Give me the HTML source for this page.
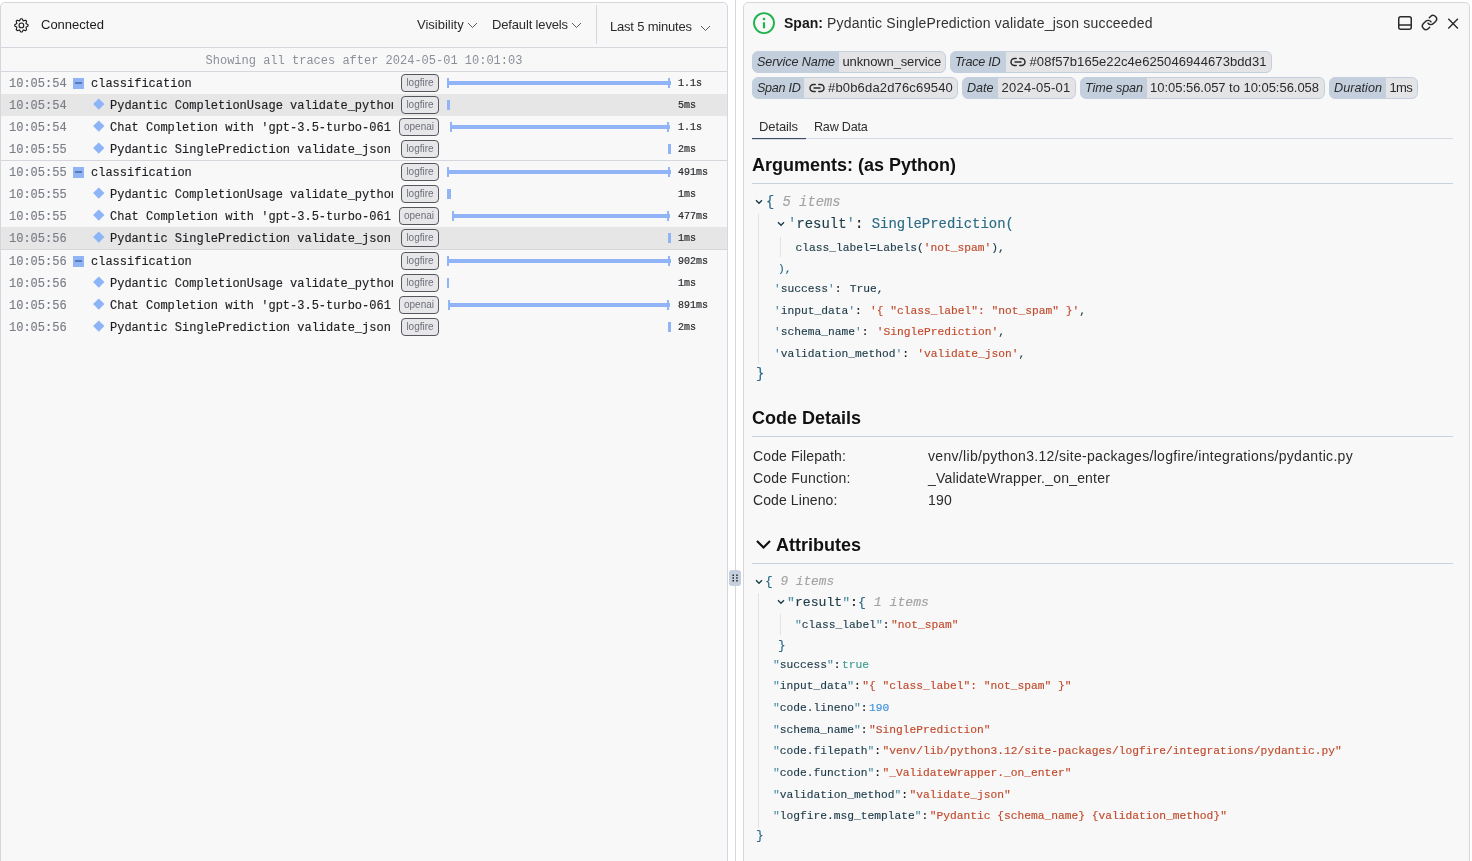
<!DOCTYPE html>
<html><head><meta charset="utf-8">
<style>
*{box-sizing:border-box;margin:0;padding:0}
html,body{width:1472px;height:861px;overflow:hidden;background:#fff;font-family:"Liberation Sans",sans-serif;position:relative}
#root{position:absolute;left:0;top:0;width:1472px;height:861px;will-change:transform}
.abs{position:absolute}
.panel{position:absolute;background:#f8f8f8;border:1px solid #d6d7dd;border-radius:5px 5px 0 0;}
#left{left:0;top:2px;width:728px;height:900px;}
#right{left:743px;top:2px;width:727px;height:900px;}
.vline{position:absolute;background:#d6d7dd}
.mono{font-family:"Liberation Mono",monospace;-webkit-text-stroke:0.15px currentColor}
.t{position:absolute;white-space:nowrap}
.ts{position:absolute;left:9px;margin-top:1px;font:12px/22px "Liberation Mono",monospace;color:#7a7e87;-webkit-text-stroke:0.15px currentColor}
.nm{position:absolute;margin-top:1px;font:12px/22px "Liberation Mono",monospace;color:#1d1e21;white-space:nowrap;overflow:hidden;-webkit-text-stroke:0.15px currentColor}
.badge{position:absolute;height:18px;border:1px solid #55575d;border-radius:4px;background:#e7e7ea;font:10px/16px "Liberation Sans",sans-serif;color:#6d7079;text-align:center}
.hl{position:absolute;left:1px;width:726px;height:22px;background:#e6e6e6}
.bar{position:absolute;background:#91b4f6}
.dur{position:absolute;left:678px;margin-top:1px;font:10px/22px "Liberation Mono",monospace;color:#2a2c30;-webkit-text-stroke:0.2px currentColor}
.dia{position:absolute;width:7.5px;height:7.5px;background:#8db4f7;transform:rotate(45deg)}
.minus{position:absolute;left:73px;width:11px;height:11px;background:#91b4f6}
.tag{height:22px;border:1px solid #c4cfde;border-radius:6px;background:#c4cfde;overflow:hidden}
.tl{position:absolute;left:0;top:0;height:20px;padding-left:4px;font:italic 12.6px/20px "Liberation Sans",sans-serif;color:#2b2b2b;white-space:nowrap}
.tv{position:absolute;top:0;height:20px;background:#e4e4e7}
.h2{font:bold 18px/22px "Liberation Sans",sans-serif;color:#111}
.minus:after{content:"";position:absolute;left:2px;top:3.8px;width:7px;height:2px;background:#5b7ab8}
</style></head><body><div id="root">

<div id="left" class="panel">
</div>
<div class="abs" style="left:0;top:0;width:728px;height:861px">
<svg class="abs" style="left:9px;top:13px" width="24" height="24" viewBox="-0.4 -0.4 24 24" fill="none" stroke="#1a1a1a" stroke-width="1.1" stroke-linejoin="round"><path d="M11.30 5.34 L12.70 5.34 L13.88 7.47 L16.22 6.79 L17.21 7.78 L16.53 10.12 L18.66 11.30 L18.66 12.70 L16.53 13.88 L17.21 16.22 L16.22 17.21 L13.88 16.53 L12.70 18.66 L11.30 18.66 L10.12 16.53 L7.78 17.21 L6.79 16.22 L7.47 13.88 L5.34 12.70 L5.34 11.30 L7.47 10.12 L6.79 7.78 L7.78 6.79 L10.12 7.47Z"/><circle cx="12" cy="12" r="2.35"/></svg>
<div class="t" style="left:41px;top:17px;font-size:13px;line-height:16px;color:#1c1c1c">Connected</div>
<div class="t" style="left:417px;top:17px;font-size:13px;line-height:16px;color:#2a2a2a">Visibility</div>
<svg class="abs" style="left:467px;top:22px" width="11" height="7" viewBox="0 0 11 7" fill="none" stroke="#5a5a5a" stroke-width="1"><path d="M1 1l4.5 4.5L10 1"/></svg>
<div class="t" style="left:492px;top:17px;font-size:13px;line-height:16px;color:#2a2a2a;letter-spacing:-0.15px">Default levels</div>
<svg class="abs" style="left:571px;top:22px" width="11" height="7" viewBox="0 0 11 7" fill="none" stroke="#5a5a5a" stroke-width="1"><path d="M1 1l4.5 4.5L10 1"/></svg>
<div class="vline" style="left:596px;top:5px;width:1px;height:39px"></div>
<div class="t" style="left:610px;top:19px;font-size:13px;line-height:16px;color:#2a2a2a;letter-spacing:-0.2px">Last 5 minutes</div>
<svg class="abs" style="left:700px;top:25px" width="11" height="7" viewBox="0 0 11 7" fill="none" stroke="#5a5a5a" stroke-width="1"><path d="M1 1l4.5 4.5L10 1"/></svg>
<div class="vline" style="left:1px;top:47px;width:726px;height:1px"></div>
<div class="t mono" style="left:0;width:728px;text-align:center;top:50px;font-size:12px;line-height:23px;color:#8a8f98;-webkit-text-stroke:0">Showing all traces after 2024-05-01 10:01:03</div>
<div class="vline" style="left:1px;top:71px;width:726px;height:1px"></div>
<div class="ts" style="top:72px">10:05:54</div>
<div class="minus" style="top:78px"></div>
<div class="nm" style="left:91px;top:72px;width:300px">classification</div>
<div class="badge" style="left:401px;top:74px;width:38px">logfire</div>
<div class="bar" style="left:447px;top:81px;width:224px;height:4px"></div>
<div class="bar" style="left:447px;top:78px;width:2px;height:10px"></div>
<div class="bar" style="left:668px;top:78px;width:2px;height:10px"></div>
<div class="dur" style="top:72px">1.1s</div>
<div class="hl" style="top:94px"></div>
<div class="ts" style="top:94px">10:05:54</div>
<div class="dia" style="left:95px;top:100.4px"></div>
<div class="nm" style="left:110px;top:94px;width:283px">Pydantic CompletionUsage validate_python</div>
<div class="badge" style="left:401px;top:96px;width:38px">logfire</div>
<div class="bar" style="left:447px;top:100px;width:3px;height:10px"></div>
<div class="dur" style="top:94px">5ms</div>
<div class="ts" style="top:116px">10:05:54</div>
<div class="dia" style="left:95px;top:122.4px"></div>
<div class="nm" style="left:110px;top:116px;width:283px">Chat Completion with &#39;gpt-3.5-turbo-061</div>
<div class="badge" style="left:399px;top:118px;width:40px">openai</div>
<div class="bar" style="left:450px;top:125px;width:220px;height:4px"></div>
<div class="bar" style="left:450px;top:122px;width:2px;height:10px"></div>
<div class="bar" style="left:667px;top:122px;width:2px;height:10px"></div>
<div class="dur" style="top:116px">1.1s</div>
<div class="ts" style="top:138px">10:05:55</div>
<div class="dia" style="left:95px;top:144.4px"></div>
<div class="nm" style="left:110px;top:138px;width:283px">Pydantic SinglePrediction validate_json</div>
<div class="badge" style="left:401px;top:140px;width:38px">logfire</div>
<div class="bar" style="left:668px;top:144px;width:3px;height:10px"></div>
<div class="dur" style="top:138px">2ms</div>
<div class="ts" style="top:161px">10:05:55</div>
<div class="minus" style="top:167px"></div>
<div class="nm" style="left:91px;top:161px;width:300px">classification</div>
<div class="badge" style="left:401px;top:163px;width:38px">logfire</div>
<div class="bar" style="left:447px;top:170px;width:224px;height:4px"></div>
<div class="bar" style="left:447px;top:167px;width:2px;height:10px"></div>
<div class="bar" style="left:668px;top:167px;width:2px;height:10px"></div>
<div class="dur" style="top:161px">491ms</div>
<div class="ts" style="top:183px">10:05:55</div>
<div class="dia" style="left:95px;top:189.4px"></div>
<div class="nm" style="left:110px;top:183px;width:283px">Pydantic CompletionUsage validate_python</div>
<div class="badge" style="left:401px;top:185px;width:38px">logfire</div>
<div class="bar" style="left:447px;top:189px;width:4px;height:10px"></div>
<div class="dur" style="top:183px">1ms</div>
<div class="ts" style="top:205px">10:05:55</div>
<div class="dia" style="left:95px;top:211.4px"></div>
<div class="nm" style="left:110px;top:205px;width:283px">Chat Completion with &#39;gpt-3.5-turbo-061</div>
<div class="badge" style="left:399px;top:207px;width:40px">openai</div>
<div class="bar" style="left:452px;top:214px;width:218px;height:4px"></div>
<div class="bar" style="left:452px;top:211px;width:2px;height:10px"></div>
<div class="bar" style="left:667px;top:211px;width:2px;height:10px"></div>
<div class="dur" style="top:205px">477ms</div>
<div class="hl" style="top:227px"></div>
<div class="ts" style="top:227px">10:05:56</div>
<div class="dia" style="left:95px;top:233.4px"></div>
<div class="nm" style="left:110px;top:227px;width:283px">Pydantic SinglePrediction validate_json</div>
<div class="badge" style="left:401px;top:229px;width:38px">logfire</div>
<div class="bar" style="left:668px;top:233px;width:3px;height:10px"></div>
<div class="dur" style="top:227px">1ms</div>
<div class="ts" style="top:250px">10:05:56</div>
<div class="minus" style="top:256px"></div>
<div class="nm" style="left:91px;top:250px;width:300px">classification</div>
<div class="badge" style="left:401px;top:252px;width:38px">logfire</div>
<div class="bar" style="left:447px;top:259px;width:224px;height:4px"></div>
<div class="bar" style="left:447px;top:256px;width:2px;height:10px"></div>
<div class="bar" style="left:668px;top:256px;width:2px;height:10px"></div>
<div class="dur" style="top:250px">902ms</div>
<div class="ts" style="top:272px">10:05:56</div>
<div class="dia" style="left:95px;top:278.4px"></div>
<div class="nm" style="left:110px;top:272px;width:283px">Pydantic CompletionUsage validate_python</div>
<div class="badge" style="left:401px;top:274px;width:38px">logfire</div>
<div class="bar" style="left:447px;top:278px;width:2px;height:10px"></div>
<div class="dur" style="top:272px">1ms</div>
<div class="ts" style="top:294px">10:05:56</div>
<div class="dia" style="left:95px;top:300.4px"></div>
<div class="nm" style="left:110px;top:294px;width:283px">Chat Completion with &#39;gpt-3.5-turbo-061</div>
<div class="badge" style="left:399px;top:296px;width:40px">openai</div>
<div class="bar" style="left:448px;top:303px;width:222px;height:4px"></div>
<div class="bar" style="left:448px;top:300px;width:2px;height:10px"></div>
<div class="bar" style="left:667px;top:300px;width:2px;height:10px"></div>
<div class="dur" style="top:294px">891ms</div>
<div class="ts" style="top:316px">10:05:56</div>
<div class="dia" style="left:95px;top:322.4px"></div>
<div class="nm" style="left:110px;top:316px;width:283px">Pydantic SinglePrediction validate_json</div>
<div class="badge" style="left:401px;top:318px;width:38px">logfire</div>
<div class="bar" style="left:668px;top:322px;width:3px;height:10px"></div>
<div class="dur" style="top:316px">2ms</div>
<div class="vline" style="left:1px;top:160px;width:726px;height:1px"></div>
<div class="vline" style="left:1px;top:249px;width:726px;height:1px"></div>
</div>

<div class="vline" style="left:735px;top:0;width:1px;height:861px"></div>
<div class="abs" style="left:729px;top:570px;width:12px;height:16px;border-radius:3px;background:#c5cfdd"></div>
<svg class="abs" style="left:729px;top:570px" width="12" height="16"><g fill="#222"><rect x="3.5" y="4.5" width="1.5" height="1.5"/><rect x="7.2" y="4.5" width="1.5" height="1.5"/><rect x="3.5" y="7.2" width="1.5" height="1.5"/><rect x="7.2" y="7.2" width="1.5" height="1.5"/><rect x="3.5" y="10" width="1.5" height="1.5"/><rect x="7.2" y="10" width="1.5" height="1.5"/></g></svg>

<div id="right" class="panel"></div>

<svg class="abs" style="left:752px;top:12px" width="24" height="24" viewBox="0 0 24 24" fill="none" stroke="#1fb34c" stroke-width="1.9"><circle cx="12" cy="11.1" r="10"/><path d="M12 10.3v6" stroke-width="2.2"/><circle cx="12" cy="7" r="0.6" fill="#1fb34c" stroke-width="1.4"/></svg>
<div class="t" style="left:784px;top:14px;font-size:14px;line-height:18px;color:#333"><b style="color:#1a1a1a">Span:</b><span style="letter-spacing:0.2px"> Pydantic SinglePrediction validate_json succeeded</span></div>
<svg class="abs" style="left:1397px;top:15px" width="16" height="16" viewBox="0 0 16 16" fill="none" stroke="#2a2a2a" stroke-width="1.5"><rect x="1.75" y="1.75" width="12.5" height="12.5" rx="2"/><path d="M1.75 10h12.5"/></svg>
<svg class="abs" style="left:1420.5px;top:14.3px" width="17" height="17" viewBox="0 0 24 24" fill="none" stroke="#2a2a2a" stroke-width="2.1" stroke-linecap="round" stroke-linejoin="round"><path d="M10 13a5 5 0 0 0 7.54.54l3-3a5 5 0 0 0-7.07-7.07l-1.72 1.71"/><path d="M14 11a5 5 0 0 0-7.54-.54l-3 3a5 5 0 0 0 7.07 7.07l1.71-1.71"/></svg>
<svg class="abs" style="left:1446px;top:16px" width="14" height="14" viewBox="0 0 14 14" fill="none" stroke="#2a2a2a" stroke-width="1.4"><path d="M2.3 2.8l9.6 9.6M11.9 2.8L2.3 12.4"/></svg>
<div class="abs tag" style="left:752px;top:51px;width:194px"><div class="tl" style="width:87px;letter-spacing:-0.094px">Service Name</div><div class="tv" style="left:86px;width:107px"></div></div>
<div class="t" style="left:842.5px;top:51px;line-height:22px;font-size:13px;color:#2a2a2a;letter-spacing:-0.129px">unknown_service</div>
<div class="abs tag" style="left:950px;top:51px;width:322px"><div class="tl" style="width:56px;letter-spacing:-0.234px">Trace ID</div><div class="tv" style="left:55px;width:266px"></div></div>
<svg class="abs" style="left:1010px;top:56px" width="16" height="12" viewBox="0 0 16 12" fill="none" stroke="#2a2a2a" stroke-width="1.5" stroke-linecap="round"><path d="M6.2 2.5H4.5a3.5 3.5 0 0 0 0 7h1.7M9.8 2.5h1.7a3.5 3.5 0 0 1 0 7H9.8M5 6h6"/></svg>
<div class="t" style="left:1029.5px;top:51px;line-height:22px;font-size:13px;color:#2a2a2a;letter-spacing:0.084px">#08f57b165e22c4e625046944673bdd31</div>
<div class="abs tag" style="left:752px;top:77px;width:206px"><div class="tl" style="width:52px;letter-spacing:-0.290px">Span ID</div><div class="tv" style="left:51px;width:154px"></div></div>
<svg class="abs" style="left:809px;top:82px" width="16" height="12" viewBox="0 0 16 12" fill="none" stroke="#2a2a2a" stroke-width="1.5" stroke-linecap="round"><path d="M6.2 2.5H4.5a3.5 3.5 0 0 0 0 7h1.7M9.8 2.5h1.7a3.5 3.5 0 0 1 0 7H9.8M5 6h6"/></svg>
<div class="t" style="left:828px;top:77px;line-height:22px;font-size:13px;color:#2a2a2a;letter-spacing:0.166px">#b0b6da2d76c69540</div>
<div class="abs tag" style="left:962px;top:77px;width:114px"><div class="tl" style="width:36px;letter-spacing:-0.029px">Date</div><div class="tv" style="left:35px;width:78px"></div></div>
<div class="t" style="left:1001.5px;top:77px;line-height:22px;font-size:13px;color:#2a2a2a;letter-spacing:0.250px">2024-05-01</div>
<div class="abs tag" style="left:1080px;top:77px;width:245px"><div class="tl" style="width:67px;letter-spacing:-0.079px">Time span</div><div class="tv" style="left:66px;width:178px"></div></div>
<div class="t" style="left:1150px;top:77px;line-height:22px;font-size:13px;color:#2a2a2a;letter-spacing:-0.031px">10:05:56.057 to 10:05:56.058</div>
<div class="abs tag" style="left:1329px;top:77px;width:89px"><div class="tl" style="width:57px;letter-spacing:0.047px">Duration</div><div class="tv" style="left:56px;width:32px"></div></div>
<div class="t" style="left:1389.5px;top:77px;line-height:22px;font-size:13px;color:#2a2a2a;letter-spacing:-0.686px">1ms</div>
<div class="t" style="left:759px;top:119px;font-size:13px;line-height:16px;color:#2f2f2f;letter-spacing:-0.105px">Details</div>
<div class="t" style="left:814px;top:119px;font-size:12.6px;line-height:16px;color:#2f2f2f;letter-spacing:-0.228px">Raw Data</div>
<div class="vline" style="left:752px;top:138px;width:701px;height:1px;background:#d3dae4"></div>
<div class="abs" style="left:752px;top:138px;width:54px;height:1px;background:#3d4d68;box-shadow:0 0.5px 0 rgba(61,77,104,0.35)"></div>
<div class="t h2" style="left:752px;top:154px">Arguments: (as Python)</div>
<div class="vline" style="left:752px;top:183px;width:701px;height:1px;background:#c9d3e0"></div>
<svg class="abs" style="left:755px;top:199px" width="8" height="6" viewBox="0 0 8 6" fill="none" stroke="#1d3b49" stroke-width="1.4"><path d="M1 1.2l3 3 3-3"/></svg>
<div class="t mono" style="left:766px;top:193.5px;font-size:13.8px;line-height:18px"><span style="color:#2b6b85">{</span> <span style="color:#a3a3a3;font-style:italic">5 items</span></div>
<div class="vline" style="left:758px;top:214px;width:1px;height:150px;background:#e3e3e3"></div>
<svg class="abs" style="left:777px;top:221px" width="8" height="6" viewBox="0 0 8 6" fill="none" stroke="#1d3b49" stroke-width="1.4"><path d="M1 1.2l3 3 3-3"/></svg>
<div class="t mono" style="left:788px;top:215px;font-size:13.95px;line-height:18px"><span style="color:#4f8ea3">'</span><span style="color:#1d3b49">result</span><span style="color:#4f8ea3">'</span><span style="color:#161616">: </span><span style="color:#2b6b85">SinglePrediction(</span></div>
<div class="vline" style="left:780px;top:237px;width:1px;height:20px;background:#e3e3e3"></div>
<div class="t mono" style="left:795.5px;top:240px;font-size:11.25px;line-height:16px"><span style="color:#1d3b49">class_label=Labels(</span><span style="color:#c04a2c">'not_spam'</span><span style="color:#1d3b49">),</span></div>
<div class="t mono" style="left:778px;top:260.5px;font-size:11.25px;line-height:16px"><span style="color:#2b6b85">),</span></div>
<div class="t mono" style="left:774px;top:280.5px;font-size:11.25px;line-height:16px"><span style="color:#4f8ea3">'</span><span style="color:#1d3b49">success</span><span style="color:#4f8ea3">'</span><span style="color:#161616">: </span><span style="margin-left:1.5px"></span><span style="color:#1d3b49">True,</span></div>
<div class="t mono" style="left:774px;top:302.7px;font-size:11.25px;line-height:16px"><span style="color:#4f8ea3">'</span><span style="color:#1d3b49">input_data</span><span style="color:#4f8ea3">'</span><span style="color:#161616">: </span><span style="margin-left:1.5px"></span><span style="color:#c04a2c">'{ "class_label": "not_spam" }'</span><span style="color:#1d3b49">,</span></div>
<div class="t mono" style="left:774px;top:324px;font-size:11.25px;line-height:16px"><span style="color:#4f8ea3">'</span><span style="color:#1d3b49">schema_name</span><span style="color:#4f8ea3">'</span><span style="color:#161616">: </span><span style="margin-left:1.5px"></span><span style="color:#c04a2c">'SinglePrediction'</span><span style="color:#1d3b49">,</span></div>
<div class="t mono" style="left:774px;top:345.7px;font-size:11.25px;line-height:16px"><span style="color:#4f8ea3">'</span><span style="color:#1d3b49">validation_method</span><span style="color:#4f8ea3">'</span><span style="color:#161616">: </span><span style="margin-left:1.5px"></span><span style="color:#c04a2c">'validate_json'</span><span style="color:#1d3b49">,</span></div>
<div class="t mono" style="left:756px;top:365.5px;font-size:13.8px;line-height:18px"><span style="color:#2b6b85">}</span></div>
<div class="t h2" style="left:752px;top:407px">Code Details</div>
<div class="vline" style="left:752px;top:436px;width:701px;height:1px;background:#c9d3e0"></div>
<div class="t" style="left:753px;top:447px;font-size:14px;line-height:18px;color:#2b2b2b;letter-spacing:0.139px">Code Filepath:</div>
<div class="t" style="left:928px;top:447px;font-size:14px;line-height:18px;color:#2b2b2b;letter-spacing:0.320px">venv/lib/python3.12/site-packages/logfire/integrations/pydantic.py</div>
<div class="t" style="left:753px;top:469px;font-size:14px;line-height:18px;color:#2b2b2b;letter-spacing:0.183px">Code Function:</div>
<div class="t" style="left:928px;top:469px;font-size:14px;line-height:18px;color:#2b2b2b;letter-spacing:0.195px">_ValidateWrapper._on_enter</div>
<div class="t" style="left:753px;top:491px;font-size:14px;line-height:18px;color:#2b2b2b;letter-spacing:0.101px">Code Lineno:</div>
<div class="t" style="left:928px;top:491px;font-size:14px;line-height:18px;color:#2b2b2b;letter-spacing:0.214px">190</div>
<svg class="abs" style="left:755px;top:538px" width="17" height="13" viewBox="0 0 17 13" fill="none" stroke="#111" stroke-width="2.2"><path d="M2 3l6.5 6.5L15 3"/></svg>
<div class="t h2" style="left:776px;top:534px">Attributes</div>
<div class="vline" style="left:752px;top:563px;width:701px;height:1px;background:#c9d3e0"></div>
<svg class="abs" style="left:755px;top:579px" width="8" height="6" viewBox="0 0 8 6" fill="none" stroke="#1d3b49" stroke-width="1.4"><path d="M1 1.2l3 3 3-3"/></svg>
<div class="t mono" style="left:765px;top:573px;font-size:12.8px;line-height:18px"><span style="color:#2b6b85">{</span> <span style="color:#a3a3a3;font-style:italic">9 items</span></div>
<div class="vline" style="left:758px;top:593px;width:1px;height:235px;background:#e3e3e3"></div>
<svg class="abs" style="left:777px;top:599px" width="8" height="6" viewBox="0 0 8 6" fill="none" stroke="#1d3b49" stroke-width="1.4"><path d="M1 1.2l3 3 3-3"/></svg>
<div class="t mono" style="left:787px;top:594px;font-size:13.15px;line-height:18px"><span style="color:#4f8ea3">"</span><span style="color:#1d3b49">result</span><span style="color:#4f8ea3">"</span><span style="color:#161616">:</span><span style="color:#2b6b85">{</span> <span style="color:#a3a3a3;font-style:italic">1 items</span></div>
<div class="vline" style="left:780px;top:614px;width:1px;height:21px;background:#e3e3e3"></div>
<div class="t mono" style="left:795px;top:616.8px;font-size:11.25px;line-height:16px"><span style="color:#4f8ea3">"</span><span style="color:#1d3b49">class_label</span><span style="color:#4f8ea3">"</span><span style="color:#161616">:</span><span style="margin-left:1.5px"></span><span style="color:#c04a2c">"not_spam"</span></div>
<div class="t mono" style="left:778px;top:636.5px;font-size:12.7px;line-height:18px"><span style="color:#2b6b85">}</span></div>
<div class="t mono" style="left:773px;top:656.7px;font-size:11.25px;line-height:16px"><span style="color:#4f8ea3">"</span><span style="color:#1d3b49">success</span><span style="color:#4f8ea3">"</span><span style="color:#161616">:</span><span style="margin-left:1.5px"></span><span style="color:#3a9e8e">true</span></div>
<div class="t mono" style="left:773px;top:677.7px;font-size:11.25px;line-height:16px"><span style="color:#4f8ea3">"</span><span style="color:#1d3b49">input_data</span><span style="color:#4f8ea3">"</span><span style="color:#161616">:</span><span style="margin-left:1.5px"></span><span style="color:#c04a2c">"{ "class_label": "not_spam" }"</span></div>
<div class="t mono" style="left:773px;top:699.6px;font-size:11.25px;line-height:16px"><span style="color:#4f8ea3">"</span><span style="color:#1d3b49">code.lineno</span><span style="color:#4f8ea3">"</span><span style="color:#161616">:</span><span style="margin-left:1.5px"></span><span style="color:#3f8fdc">190</span></div>
<div class="t mono" style="left:773px;top:721.6px;font-size:11.25px;line-height:16px"><span style="color:#4f8ea3">"</span><span style="color:#1d3b49">schema_name</span><span style="color:#4f8ea3">"</span><span style="color:#161616">:</span><span style="margin-left:1.5px"></span><span style="color:#c04a2c">"SinglePrediction"</span></div>
<div class="t mono" style="left:773px;top:742.6px;font-size:11.25px;line-height:16px"><span style="color:#4f8ea3">"</span><span style="color:#1d3b49">code.filepath</span><span style="color:#4f8ea3">"</span><span style="color:#161616">:</span><span style="margin-left:1.5px"></span><span style="color:#c04a2c">"venv/lib/python3.12/site-packages/logfire/integrations/pydantic.py"</span></div>
<div class="t mono" style="left:773px;top:764.6px;font-size:11.25px;line-height:16px"><span style="color:#4f8ea3">"</span><span style="color:#1d3b49">code.function</span><span style="color:#4f8ea3">"</span><span style="color:#161616">:</span><span style="margin-left:1.5px"></span><span style="color:#c04a2c">"_ValidateWrapper._on_enter"</span></div>
<div class="t mono" style="left:773px;top:786.6px;font-size:11.25px;line-height:16px"><span style="color:#4f8ea3">"</span><span style="color:#1d3b49">validation_method</span><span style="color:#4f8ea3">"</span><span style="color:#161616">:</span><span style="margin-left:1.5px"></span><span style="color:#c04a2c">"validate_json"</span></div>
<div class="t mono" style="left:773px;top:807.6px;font-size:11.25px;line-height:16px"><span style="color:#4f8ea3">"</span><span style="color:#1d3b49">logfire.msg_template</span><span style="color:#4f8ea3">"</span><span style="color:#161616">:</span><span style="margin-left:1.5px"></span><span style="color:#c04a2c">"Pydantic {schema_name} {validation_method}"</span></div>
<div class="t mono" style="left:756px;top:826.7px;font-size:12.8px;line-height:18px"><span style="color:#2b6b85">}</span></div>
</div></body></html>
